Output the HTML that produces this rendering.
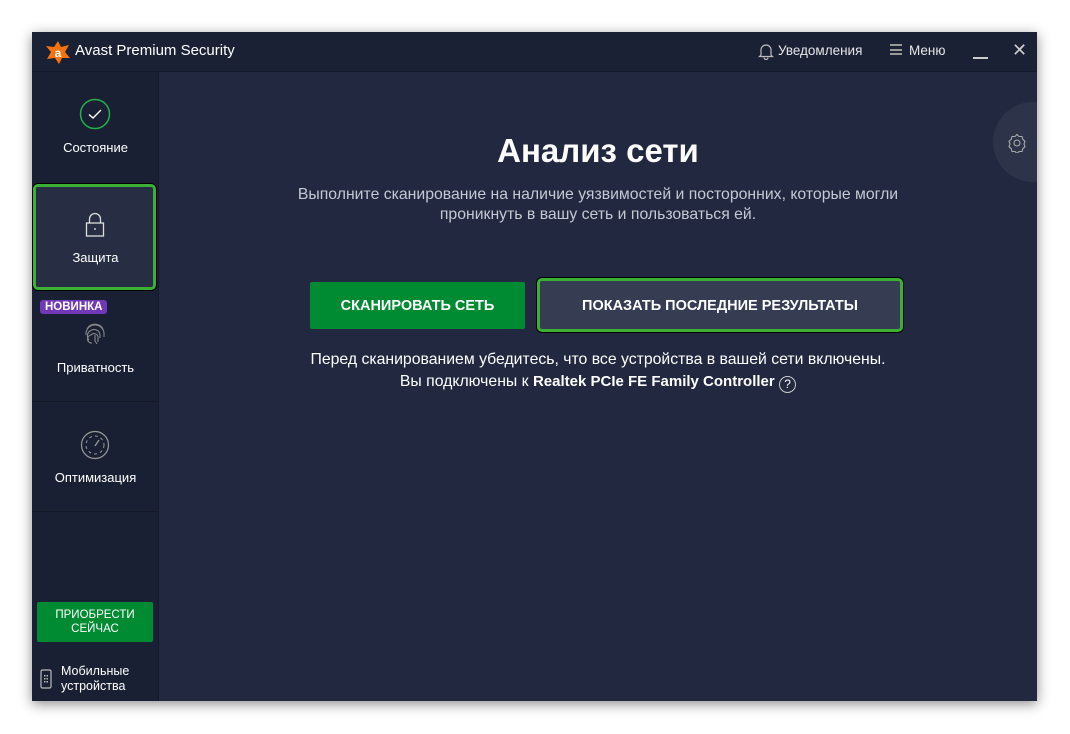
<!DOCTYPE html>
<html><head><meta charset="utf-8"><style>
*{margin:0;padding:0;box-sizing:border-box}
body{width:1070px;height:734px;background:#fff;font-family:"Liberation Sans",sans-serif;position:relative;overflow:hidden}
.win{position:absolute;left:32px;top:32px;width:1005px;height:669px;background:#21283f;box-shadow:0 3px 12px rgba(0,0,0,.45);overflow:hidden}
.title{position:absolute;left:0;top:0;width:1005px;height:40px;background:#1b2135;border-bottom:1px solid #13182a;color:#fff}
.side{position:absolute;left:0;top:40px;width:127px;height:629px;background:#1a2033;border-right:1px solid #141929}
.t{position:absolute;white-space:nowrap}
.item{position:absolute;left:0;width:127px;text-align:center;color:#fff;font-size:13px}
.sep{position:absolute;left:0;width:127px;height:1px;background:#141928}
.c{position:absolute;left:127px;width:878px;text-align:center}
</style></head><body>
<div class="win">
 <div class="title">
  <svg class="t" style="left:13px;top:7px" width="26" height="26" viewBox="0 0 26 26"><path d="M13 2 L16 8 L24 6 L20 13 L25 19 L17 19 L14 25 L10 19 L2 20 L6 13 L1 7 L9 8 Z" fill="#f4730e"/><circle cx="13" cy="14" r="5.5" fill="#f4730e"/><text x="13" y="18" font-size="12" font-weight="bold" text-anchor="middle" fill="#fff" font-family="Liberation Sans">a</text></svg>
  <div class="t" style="left:43px;top:10px;font-size:15px">Avast Premium Security</div>
  <svg class="t" style="left:726px;top:10px" width="16" height="18" viewBox="0 0 16 18"><path d="M3 13 V8 a5 5 0 0 1 10 0 V13 L14.5 14.5 H1.5 Z M6 15.5 a2 2 0 0 0 4 0" fill="none" stroke="#bbb" stroke-width="1.2"/></svg>
  <div class="t" style="left:746px;top:11px;font-size:13.5px;color:#e6e6e6">Уведомления</div>
  <div class="t" style="left:858px;top:12px;width:12px;height:11px;border-top:2px solid #999;border-bottom:2px solid #999"><div style="margin-top:2.5px;height:2px;background:#999"></div></div>
  <div class="t" style="left:877px;top:11px;font-size:13.5px;color:#e6e6e6">Меню</div>
  <div class="t" style="left:941px;top:25px;width:15px;height:1.5px;background:#ccc"></div>
  <div class="t" style="left:980px;top:8px;font-size:18px;color:#ccc">✕</div>
 </div>
 <div class="side">
  <svg class="t" style="left:47px;top:26px" width="32" height="32"><circle cx="16" cy="16" r="14.5" fill="none" stroke="#22b14c" stroke-width="1.5"/><path d="M10 16.5 L14 20 L22 12" fill="none" stroke="#fff" stroke-width="1.4"/></svg>
  <div class="item" style="top:68px">Состояние</div>
  <div style="position:absolute;left:1px;top:112px;width:123px;height:106px;background:#272e44;border:3px solid #3cb034;border-radius:5px;box-shadow:0 0 0 1px #000"></div>
  <svg class="t" style="left:53px;top:140px" width="20" height="26" viewBox="0 0 20 26"><path d="M4.5 11 V7 a5.5 5.5 0 0 1 11 0 V11" fill="none" stroke="#ddd" stroke-width="1.3"/><rect x="1.5" y="11" width="17" height="13" fill="none" stroke="#ddd" stroke-width="1.3"/><path d="M10 16 V18" stroke="#ddd" stroke-width="1.3"/></svg>
  <div class="item" style="top:178px">Защита</div>
  <div class="t" style="left:8px;top:228px;background:#7138b8;color:#fff;font-weight:bold;font-size:11.5px;padding:1px 5px;border-radius:3px">НОВИНКА</div>
  <svg class="t" style="left:52px;top:249px" width="22" height="26" viewBox="0 0 22 26"><g fill="none" stroke="#888" stroke-width="1.1"><path d="M3 8 a9 9 0 0 1 16 0"/><path d="M2 14 a9 9 0 0 1 18 -2 v4"/><path d="M5 19 a6 6 0 0 1 1 -9 a6 6 0 0 1 10 4 v3"/><path d="M8 22 a4 4 0 0 1 -1 -8 a4 4 0 0 1 7 2 v5"/><path d="M11 14 v6 l2 3"/></g></svg>
  <div class="item" style="top:288px">Приватность</div>
  <div class="sep" style="top:329px"></div>
  <svg class="t" style="left:48px;top:358px" width="30" height="30"><circle cx="15" cy="15" r="13.5" fill="none" stroke="#999" stroke-width="1.2"/><circle cx="15" cy="15" r="9" fill="none" stroke="#999" stroke-width="1" stroke-dasharray="3 3"/><path d="M15 16 L19 10" stroke="#999" stroke-width="1.3"/></svg>
  <div class="item" style="top:398px">Оптимизация</div>
  <div class="sep" style="top:439px"></div>
  <div style="position:absolute;left:5px;top:530px;width:116px;height:40px;background:#008b33;border-radius:2px;color:#fff;font-size:11.5px;text-align:center;line-height:14px;padding-top:6px">ПРИОБРЕСТИ<br>СЕЙЧАС</div>
  <svg class="t" style="left:8px;top:597px" width="12" height="20"><rect x="1" y="1" width="10" height="18" rx="1.5" fill="none" stroke="#bbb" stroke-width="1.2"/><g fill="#bbb"><rect x="4" y="6" width="1.5" height="1.5"/><rect x="6.5" y="6" width="1.5" height="1.5"/><rect x="4" y="9" width="1.5" height="1.5"/><rect x="6.5" y="9" width="1.5" height="1.5"/><rect x="4" y="12" width="1.5" height="1.5"/><rect x="6.5" y="12" width="1.5" height="1.5"/></g></svg>
  <div class="t" style="left:29px;top:592px;color:#fff;font-size:12.5px;line-height:15px">Мобильные<br>устройства</div>
 </div>
 <div class="t" style="left:961px;top:70px;width:80px;height:80px;border-radius:50%;background:#2d3449"></div>
 <svg class="t" style="left:975px;top:101px" width="20" height="20" viewBox="0 0 20 20"><path d="M10 1.5 l2 2 h3 l.8 2.8 l2.2 2 l-1 2.7 l1 2.7 l-2.2 2 l-.8 2.8 h-3 l-2 2 l-2-2 h-3 l-.8-2.8 l-2.2-2 l1-2.7 l-1-2.7 l2.2-2 l.8-2.8 h3 Z" fill="none" stroke="#aaa" stroke-width="1.1"/><circle cx="10" cy="10" r="3" fill="none" stroke="#aaa" stroke-width="1.1"/></svg>
 <div class="c" style="top:100px;color:#fff;font-size:33px;font-weight:bold">Анализ сети</div>
 <div class="c" style="top:153px;color:#c5c9d3;font-size:15.8px;line-height:20px">Выполните сканирование на наличие уязвимостей и посторонних, которые могли<br>проникнуть в вашу сеть и пользоваться ей.</div>
 <div class="t" style="left:278px;top:250px;width:215px;height:47px;background:#008b33;border-radius:2px;color:#fff;font-weight:bold;font-size:14.5px;text-align:center;line-height:49px">СКАНИРОВАТЬ СЕТЬ</div>
 <div class="t" style="left:505px;top:246px;width:366px;height:54px;background:#363d53;border:3px solid #3cb034;border-radius:5px;box-shadow:0 0 0 1px #000;color:#fff;font-weight:bold;font-size:14.5px;text-align:center;line-height:50px">ПОКАЗАТЬ ПОСЛЕДНИЕ РЕЗУЛЬТАТЫ</div>
 <div class="c" style="top:319px;color:#fff;font-size:15.8px">Перед сканированием убедитесь, что все устройства в вашей сети включены.</div>
 <div class="c" style="top:341px;color:#fff;font-size:15.8px">Вы подключены к <b style="font-size:15px">Realtek PCIe FE Family Controller</b> <span style="display:inline-block;width:17px;height:17px;border:1px solid #ccc;border-radius:50%;font-size:12px;line-height:15px;vertical-align:-2px">?</span></div>
</div>
</body></html>
